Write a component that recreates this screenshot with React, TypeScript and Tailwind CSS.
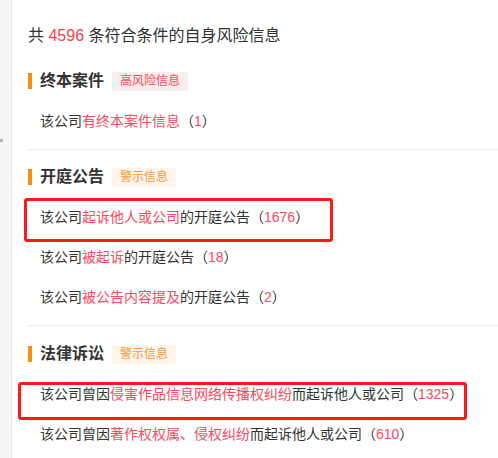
import React from "react";

type Part = { t: string; hot?: boolean };

type Item = { parts: Part[]; count: number; boxed?: "a" | "b" };

type Section = {
  title: string;
  tag: string;
  level: "high" | "warn";
  items: Item[];
};

const sections: Section[] = [
  {
    title: "终本案件",
    tag: "高风险信息",
    level: "high",
    items: [{ parts: [{ t: "该公司" }, { t: "有终本案件信息", hot: true }], count: 1 }],
  },
  {
    title: "开庭公告",
    tag: "警示信息",
    level: "warn",
    items: [
      {
        parts: [{ t: "该公司" }, { t: "起诉他人或公司", hot: true }, { t: "的开庭公告" }],
        count: 1676,
        boxed: "a",
      },
      { parts: [{ t: "该公司" }, { t: "被起诉", hot: true }, { t: "的开庭公告" }], count: 18 },
      {
        parts: [{ t: "该公司" }, { t: "被公告内容提及", hot: true }, { t: "的开庭公告" }],
        count: 2,
      },
    ],
  },
  {
    title: "法律诉讼",
    tag: "警示信息",
    level: "warn",
    items: [
      {
        parts: [
          { t: "该公司曾因" },
          { t: "侵害作品信息网络传播权纠纷", hot: true },
          { t: "而起诉他人或公司" },
        ],
        count: 1325,
        boxed: "b",
      },
      {
        parts: [
          { t: "该公司曾因" },
          { t: "著作权权属、侵权纠纷", hot: true },
          { t: "而起诉他人或公司" },
        ],
        count: 610,
      },
    ],
  },
];

function RiskTag({ label, level }: { label: string; level: "high" | "warn" }) {
  return (
    <span
      className={
        level === "high"
          ? "ml-2 h-[19px] px-2 rounded-[3px] bg-[#fdeced] text-[#fd485e] text-[12px] leading-[19px]"
          : "ml-2 h-[19px] px-2 rounded-[3px] bg-[#fef4ea] text-[#f59a3e] text-[12px] leading-[19px]"
      }
    >
      {label}
    </span>
  );
}

function ItemRow({ item }: { item: Item }) {
  return (
    <div className="relative h-10 flex items-center pl-3 text-[14px] text-[#333]">
      <span>
        {item.parts.map((p, i) => (
          <span key={i} className={p.hot ? "text-[#fd485e]" : ""}>
            {p.t}
          </span>
        ))}
        （<span className="text-[#fd485e]">{item.count}</span>）
      </span>
      {/* annotation boxes drawn over the rows */}
      {item.boxed === "a" && (
        <div className="absolute left-[-4px] top-[1px] w-[309px] h-[44px] border-[3px] border-[#ff1a1a] rounded-[3px]" />
      )}
      {item.boxed === "b" && (
        <div className="absolute left-[-10px] top-[8px] w-[449px] h-[38px] border-[3px] border-[#ff1a1a] rounded-[3px]" />
      )}
    </div>
  );
}

export default function App() {
  return (
    <div
      className="flex w-[498px] h-[458px] overflow-hidden bg-white"
      style={{ fontFamily: '"Liberation Sans", "Noto Sans CJK SC", sans-serif' }}
    >
      {/* left gutter */}
      <div className="relative w-3 shrink-0 bg-[#f5f5f5] border-r border-[#e6e6e6]">
        <div className="absolute left-0 top-[139px] w-[3px] h-[3px] bg-[#b5b5b5]" />
      </div>

      <div className="flex-1 pl-4 pt-[24px]">
        <div className="h-6 leading-6 text-[16px] text-[#333] mb-[23px]">
          共 <span className="text-[#f5424c]">4596</span> 条符合条件的自身风险信息
        </div>

        {sections.map((s, i) => (
          <div
            key={s.title}
            className={
              i === 0
                ? "pb-2 border-b border-[#ececec]"
                : i === sections.length - 1
                  ? "pt-[18px]"
                  : "pt-[17px] pb-2 border-b border-[#ececec]"
            }
          >
            <div className="h-5 flex items-center mb-[10px]">
              <span className="w-1 h-4 bg-[#fa8c16] mr-2" />
              <span className="text-[16px] font-bold text-[#333]">{s.title}</span>
              <RiskTag label={s.tag} level={s.level} />
            </div>
            {s.items.map((it, j) => (
              <ItemRow key={j} item={it} />
            ))}
          </div>
        ))}
      </div>
    </div>
  );
}
